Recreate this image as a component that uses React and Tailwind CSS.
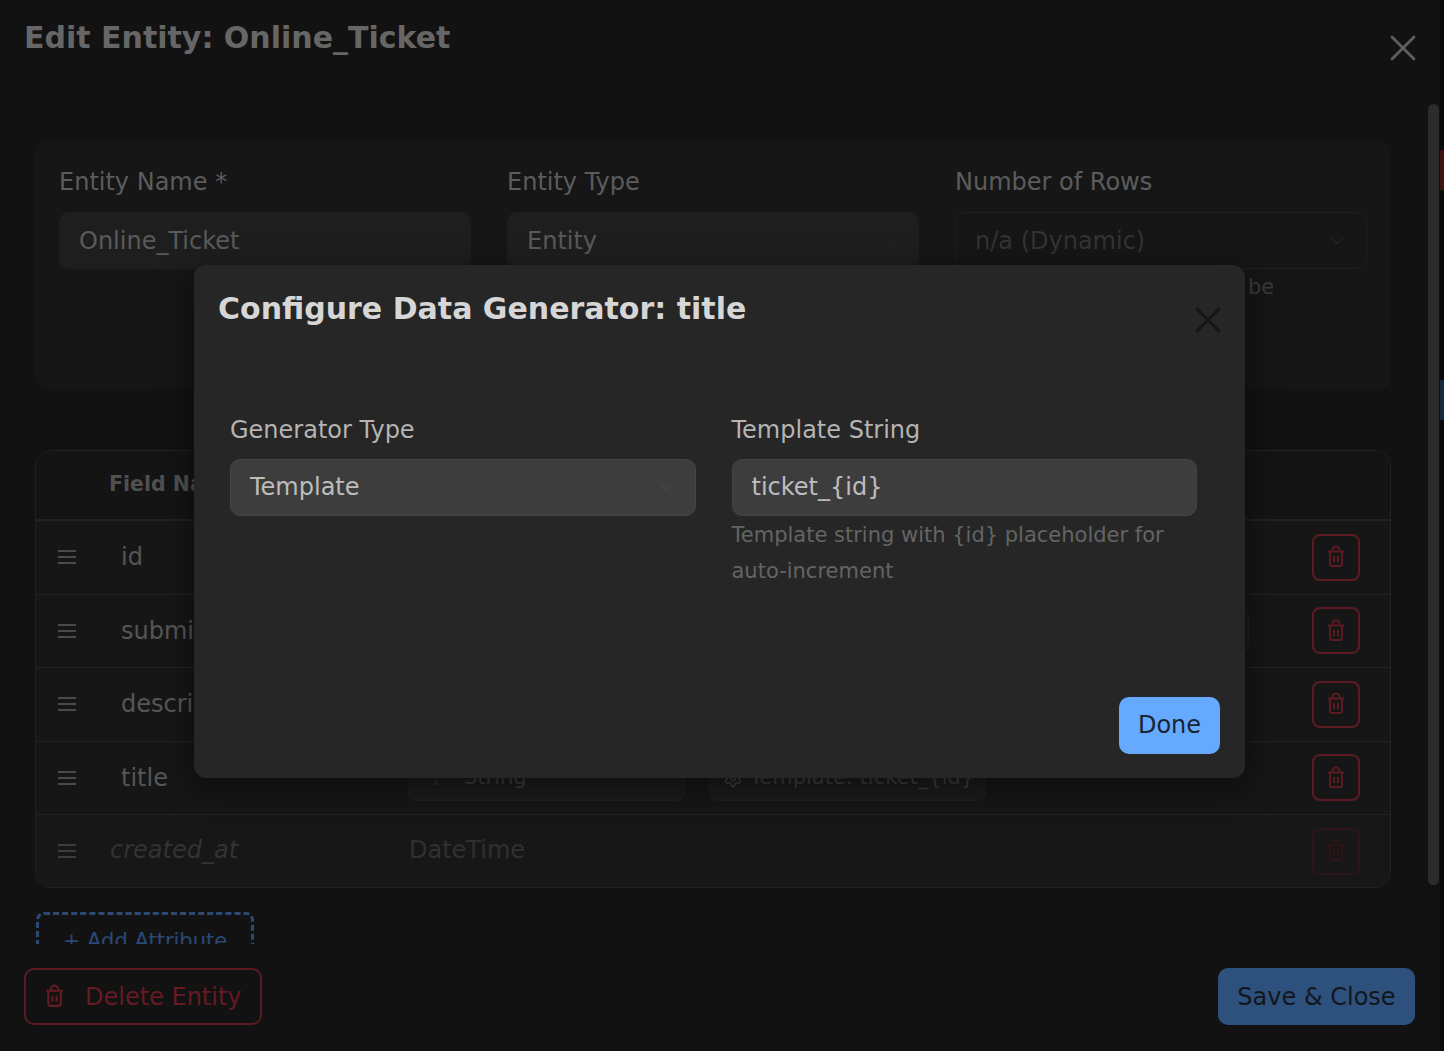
import { X, ChevronDown, Settings, Type } from "lucide-react";

const rows = [
  { name: "id" },
  { name: "submitted_at", wide: true },
  { name: "description" },
  { name: "title" },
];

function TrashIcon({ className }) {
  return (
    <svg viewBox="0 0 24 24" fill="none" stroke="currentColor" strokeWidth="2" className={className}>
      <path d="M4 6.5h16" />
      <path d="M8.5 6.5V5a3.5 3.5 0 0 1 7 0v1.5" />
      <path d="M6 6.5V19a2 2 0 0 0 2 2h8a2 2 0 0 0 2-2V6.5" />
      <path d="M10 11v6M14 11v6" />
    </svg>
  );
}

function DragIcon({ className }) {
  return (
    <svg viewBox="0 0 18 14" fill="none" stroke="currentColor" strokeWidth="2" className={className}>
      <path d="M0 1h18M0 7h18M0 13h18" />
    </svg>
  );
}

function Field({ label, value, chevron, muted, hint }) {
  return (
    <div className="flex-1 min-w-0">
      <div className="text-[24px] leading-[36px] text-[#5c5c5c]">{label}</div>
      <div
        className={
          muted
            ? "mt-[12px] h-[57px] rounded-[10px] border border-[#1f1f1f] flex items-center justify-between px-[19px] text-[24px] text-[#343434]"
            : "mt-[12px] h-[57px] rounded-[10px] bg-[#1e1e1e] flex items-center justify-between px-5 text-[24px] text-[#5a5a5a]"
        }
      >
        <span>{value}</span>
        {chevron && <ChevronDown size={20} className="text-[#232328]" />}
      </div>
      {hint && <div className="mt-[1px] text-[21px] leading-[34px] text-[#3a3a3a]">{hint}</div>}
    </div>
  );
}

function Row({ name, wide }) {
  return (
    <div className="h-[73.5px] border-b border-[#222222] flex items-center bg-[#161616]">
      <DragIcon className="ml-[22px] w-[18px] h-[14px] text-[#4a4a4a]" />
      <div className="ml-[45px] w-[287px] text-[24px] text-[#565656]">{name}</div>
      <div className="h-[46px] w-[277px] rounded-[8px] bg-[#1b1b1b] border border-[#1f1f1f] flex items-center pl-[18px] gap-[19px] text-[21px] text-[#3d3d3d]">
        <Type size={18} className="text-[#2c2c2c]" />
        String
      </div>
      <div
        className={
          wide
            ? "ml-6 h-[46px] w-[540px] rounded-[8px] bg-[#1b1b1b] border border-[#1f1f1f] flex items-center pl-[13px] gap-[7px] text-[21px] whitespace-nowrap text-[#3d3d3d]"
            : "ml-6 h-[46px] w-[277px] rounded-[8px] bg-[#1b1b1b] border border-[#1f1f1f] flex items-center pl-[13px] gap-[7px] text-[21px] whitespace-nowrap text-[#3d3d3d]"
        }
      >
        <Settings size={20} className="text-[#3d3d3d]" />
        Template: ticket_{"{id}"}
      </div>
      <button className="ml-auto mr-[30px] w-[48px] h-[47px] rounded-[8px] border-2 border-[#5c1a22] flex items-center justify-center text-[#5c1a22]">
        <TrashIcon className="w-6 h-6" />
      </button>
    </div>
  );
}

export default function App() {
  return (
    <div className="relative h-[1051px] w-[1444px] overflow-hidden bg-[#0a0a0a] font-['DejaVu_Sans',sans-serif]">
      <div className="h-full w-[1440px] rounded-br-[12px] rounded-bl-[12px] bg-[#121212] flex flex-col">
        <div className="h-[102px] shrink-0 flex items-start justify-between pl-6 pr-6 pt-[16px]">
          <h1 className="text-[30px] leading-[44px] font-bold text-[#666666]">Edit Entity: Online_Ticket</h1>
          <X size={44} strokeWidth={1.5} className="text-[#5e5e5e] mt-[10px] mr-[-9px]" />
        </div>

        <div className="h-[842px] overflow-hidden pl-[35px] pr-[49px] pt-[39px]">
          <div className="h-[248px] rounded-[12px] bg-[#161616] px-6 pt-[23px] flex gap-9">
            <Field label="Entity Name *" value="Online_Ticket" />
            <Field label="Entity Type" value="Entity" chevron />
            <Field label="Number of Rows" value="n/a (Dynamic)" chevron muted hint={<span className="block pl-[293px]">be</span>} />
          </div>

          <div className="mt-[61px] rounded-[16px] border border-[#222222] overflow-hidden">
            <div className="h-[70px] border-b-2 border-[#222222] bg-[#141414] flex items-center pl-[73px] pb-[2px] text-[20.5px] font-bold text-[#505050]">
              Field Name
            </div>
            {rows.map((r) => (
              <Row key={r.name} name={r.name} wide={r.wide} />
            ))}
            <div className="h-[72px] flex items-center bg-[#171717]">
              <DragIcon className="ml-[22px] w-[18px] h-[14px] text-[#3c3c3c]" />
              <div className="ml-[34px] w-[299px] pb-[2px] text-[24px] italic text-[#333333]">created_at</div>
              <div className="pb-[2px] text-[24px] text-[#303030]">DateTime</div>
              <button className="ml-auto mr-[30px] w-[48px] h-[47px] rounded-[8px] border-2 border-[#2e1518] flex items-center justify-center text-[#2e1518]">
                <TrashIcon className="w-6 h-6" />
              </button>
            </div>
          </div>

          <div className="mt-[24px] ml-px w-[218px] h-[60px] rounded-[8px] border-[3px] border-dashed border-[#2a4a75] flex items-center justify-center text-[21px] text-[#2a4a75]">
            + Add Attribute
          </div>
        </div>

        <div className="flex-1 bg-[#121212] flex items-start justify-between pl-6 pr-[25px] pt-[24px]">
          <button className="h-[57px] w-[238px] rounded-[10px] border-2 border-[#5c1a22] flex items-center pl-[16px] gap-[18px] text-[24px] text-[#651a24]">
            <TrashIcon className="w-[25px] h-[25px]" />
            Delete Entity
          </button>
          <button className="h-[57px] w-[197px] rounded-[10px] bg-[#2e507d] text-[24px] text-[#13161c]">Save &amp; Close</button>
        </div>
      </div>

      {/* scrollbar */}
      <div className="absolute left-[1428px] top-[104px] h-[781px] w-[11px] rounded-full bg-[#2c2c2c]" />

      {/* page peeking out behind the dialog */}
      <div className="absolute left-[1440px] top-[150px] h-[40px] w-[4px] bg-[#3d1210]" />
      <div className="absolute left-[1440px] top-[380px] h-[40px] w-[4px] bg-[#16293f]" />

      {/* generator dialog */}
      <div className="absolute left-[194px] top-[265px] w-[1051px] h-[513px] rounded-[12px] bg-[#262626] shadow-[0_8px_32px_rgba(0,0,0,0.5)]">
        <div className="flex items-start justify-between pl-6 pr-6 pt-[22px]">
          <h2 className="text-[30px] leading-[44px] font-bold text-[#d6d6d6]">Configure Data Generator: title</h2>
          <X size={44} strokeWidth={1.5} className="text-[#141414] mt-[11px] mr-[-9px]" />
        </div>
        <div className="mt-[70px] pl-9 pr-12 flex gap-9">
          <div className="flex-1">
            <div className="text-[24px] leading-[36px] text-[#b4b4b4]">Generator Type</div>
            <div className="mt-[11px] h-[57px] rounded-[10px] bg-[#3d3d3d] border border-[#444444] flex items-center justify-between px-[19px] pb-[2px] text-[24px] text-[#bdbdbd]">
              <span>Template</span>
              <ChevronDown size={20} className="text-[#444450]" />
            </div>
          </div>
          <div className="flex-1">
            <div className="text-[24px] leading-[36px] text-[#b4b4b4]">Template String</div>
            <div className="mt-[11px] h-[57px] rounded-[10px] bg-[#3d3d3d] border border-[#444444] flex items-center px-[19px] pb-[2px] text-[24px] text-[#bdbdbd]">
              ticket_{"{id}"}
            </div>
            <div className="mt-px text-[21px] leading-[36px] text-[#646464]">
              Template string with {"{id}"} placeholder for auto-increment
            </div>
          </div>
        </div>
        <button className="absolute right-[25px] bottom-[24px] h-[57px] w-[101px] pb-[2px] rounded-[10px] bg-[#66aaff] text-[24px] text-[#1a2433]">
          Done
        </button>
      </div>
    </div>
  );
}
